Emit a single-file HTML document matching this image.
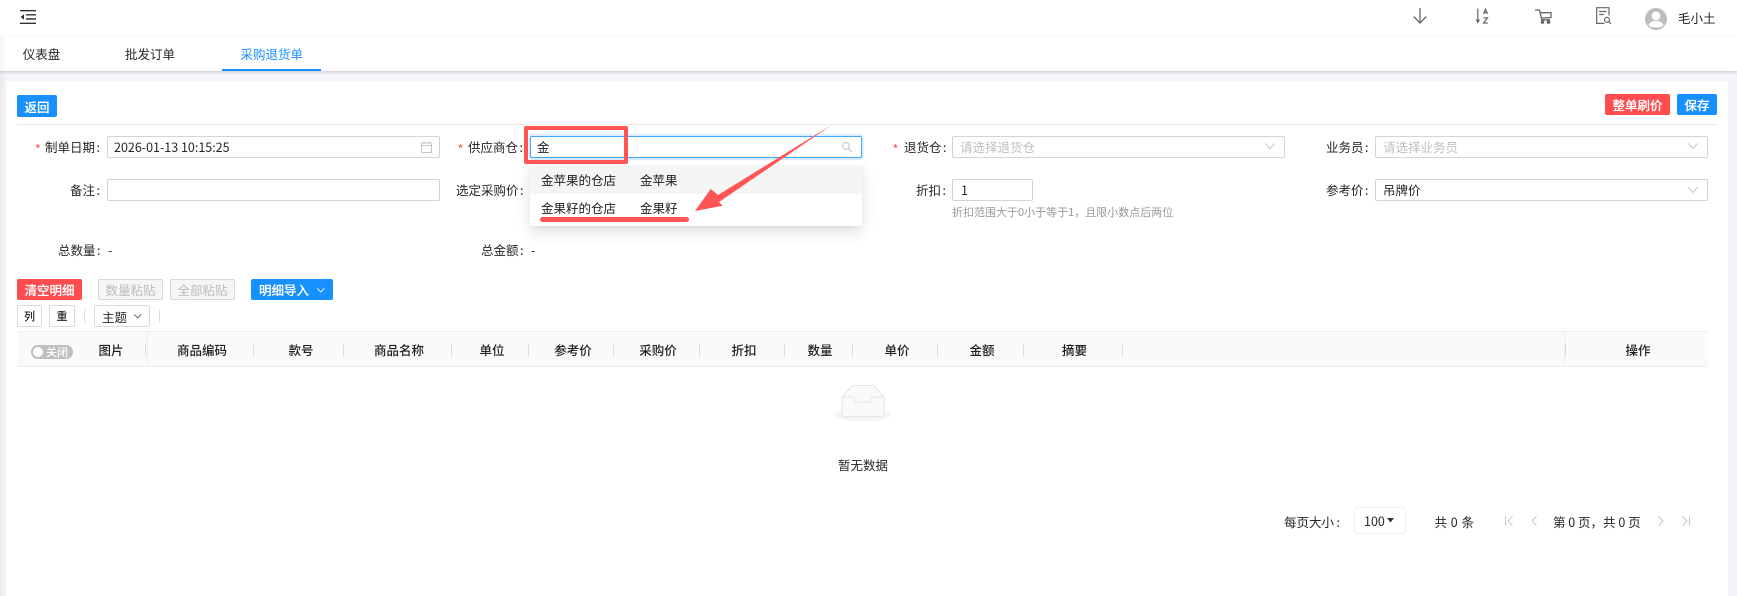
<!DOCTYPE html>
<html lang="zh-CN">
<head>
<meta charset="utf-8">
<title>采购退货单</title>
<style>
*{box-sizing:border-box;margin:0;padding:0}
html,body{width:1737px;height:596px;overflow:hidden;background:#fff}
body{position:relative;font-family:"Liberation Sans","Noto Sans CJK SC",sans-serif;font-size:12.5px;color:#262626}
.a{position:absolute}
.t{position:absolute;height:20px;line-height:20px;white-space:nowrap;font-family:"Noto Sans CJK SC","Liberation Sans",sans-serif}
.t i{font-style:normal;margin-left:1.5px}
.c{transform:translateX(-50%)}
.r{color:#ff4d4f}
.inp{position:absolute;background:#fff;border:1px solid #d4d4d4;border-radius:2px}
.btn{position:absolute;display:flex;align-items:center;justify-content:center;border-radius:2px;color:#fff;font-family:"Noto Sans CJK SC",sans-serif;font-size:12.5px;font-weight:500;white-space:nowrap;text-shadow:0 0 .4px #fff}
.blue{background:#1890ff}.red{background:#ff4d4f}
.dis{background:#f5f5f5;border:1px solid #d9d9d9;color:#bdbdbd;font-weight:400;text-shadow:none}
.wb{background:#fff;border:1px solid #d9d9d9;color:#262626;font-weight:400;text-shadow:none}
.ph{color:#bfbfbf}
.sep{position:absolute;width:1px;top:343px;height:14px;background:#dedede}
.th{font-weight:500;color:#1f1f1f;top:340px}
svg{position:absolute;overflow:visible}
</style>
</head>
<body>
<!-- page background -->
<div class="a" style="left:0;top:71px;width:1737px;height:525px;background:#f3f5f8"></div>
<div class="a" style="left:6px;top:81px;width:1722px;height:515px;background:#fff"></div>

<!-- header -->
<div class="a" style="left:0;top:0;width:1737px;height:37px;background:#fff;box-shadow:0 1px 3px rgba(0,0,0,.06)"></div>
<div class="a" style="left:0;top:37px;width:1737px;height:34px;background:#fff;box-shadow:0 1px 3px rgba(0,0,0,.2)"></div>
<div class="a" style="left:0;top:37px;width:6px;height:559px;background:linear-gradient(90deg,rgba(40,50,80,.06),rgba(40,50,80,0))"></div>

<svg style="left:20px;top:10px" width="16" height="14" fill="none" stroke="#333" stroke-width="1.4">
  <path d="M0 .7H16M6 4.800H16M6 9H16M0 13.300H16"/>
  <path d="M4 4.200V9.800L.6 7Z" fill="#333" stroke="none"/>
</svg>

<svg style="left:1413px;top:8px" width="14" height="16" fill="none" stroke="#666" stroke-width="1.3"><path d="M7 0V15M.7 8.500L7 15L13.300 8.500"/></svg>
<svg style="left:1476px;top:8px" width="14" height="16" fill="none" stroke="#666" stroke-width="1.2">
  <path d="M1.800 .5V14M.2 11.500L1.800 14.500L3.400 11.500"/>
  <path d="M7.500 6L9.500 1.300L11.500 6M8.200 4.500H10.800M7.500 9.800H11.500L7.500 15H11.800" stroke-width="1.200"/>
</svg>
<svg style="left:1535px;top:9px" width="17" height="15" fill="none" stroke="#666" stroke-width="1.3">
  <path d="M0 1H4.500L6.800 10.800H15M5 3.700H16V8.500L6.300 9"/>
  <circle cx="7.500" cy="13" r="1.200" fill="#666"/><circle cx="13.500" cy="13" r="1.200" fill="#666"/>
</svg>
<svg style="left:1596px;top:7px" width="16" height="18" fill="none" stroke="#666" stroke-width="1.2">
  <path d="M8.500 16.400H.7V.7H13V8.500M3.200 4.500H10.500M3.200 7.500H8"/>
  <circle cx="11" cy="12.800" r="2.500"/><path d="M12.800 14.600L15 16.800"/>
</svg>
<svg style="left:1645px;top:7.500px" width="22" height="22">
  <circle cx="11" cy="11" r="11" fill="#bdbdbd"/>
  <circle cx="11" cy="7.800" r="4.300" fill="#fff"/>
  <path d="M3.500 17.500C4.500 14 8 12.800 11 12.800S17.500 14 18.500 17.500C17 18.800 14 19.500 11 19.500S5 18.800 3.500 17.500Z" fill="#fff"/>
</svg>
<div class="t" style="left:1678px;top:8px;color:#1f1f1f">毛小土</div>

<!-- tabs -->
<div class="t" style="left:22.700px;top:44px">仪表盘</div>
<div class="t" style="left:125px;top:44px">批发订单</div>
<div class="t" style="left:240.500px;top:44px;color:#1890ff">采购退货单</div>
<div class="a" style="left:222px;top:69px;width:99px;height:2px;background:#1890ff"></div>

<!-- action bar -->
<div class="btn blue" style="left:17px;top:95px;width:40px;height:22px">返回</div>
<div class="btn red" style="left:1605px;top:94px;width:65px;height:21px">整单刷价</div>
<div class="btn blue" style="left:1677px;top:94px;width:40px;height:21px">保存</div>
<div class="a" style="left:17px;top:124px;width:1700px;height:1px;background:#eaeaea"></div>

<!-- form row 1 -->
<div class="t r" style="left:35px;top:139px">*</div>
<div class="t" style="left:45px;top:137px">制单日期<i>:</i></div>
<div class="inp" style="left:107px;top:136px;width:333px;height:22px"></div>
<div class="t" style="left:114px;top:137px">2026-01-13 10:15:25</div>
<svg style="left:421px;top:141px" width="11" height="12" fill="none" stroke="#c4c4c4"><path d="M.5 2H10.500V11.500H.5ZM.5 4.500H10.500M3 0V3M8 0V3"/></svg>

<div class="t r" style="left:457.500px;top:139px">*</div>
<div class="t" style="left:468px;top:137px">供应商仓<i>:</i></div>
<div class="inp" style="left:530px;top:136px;width:332px;height:22px;border-color:#40a9ff;box-shadow:0 0 0 2px rgba(24,144,255,.15)"></div>
<div class="t" style="left:537px;top:137px;color:#1f1f1f">金</div>
<svg style="left:842px;top:142px" width="10" height="10" fill="none" stroke="#c4c4c4" stroke-width="1.100"><circle cx="4" cy="4" r="3.400"/><path d="M6.500 6.500L9.800 9.800"/></svg>

<div class="t r" style="left:892.500px;top:139px">*</div>
<div class="t" style="left:904px;top:137px">退货仓<i>:</i></div>
<div class="inp" style="left:952px;top:136px;width:333px;height:22px"></div>
<div class="t ph" style="left:960px;top:137px">请选择退货仓</div>
<svg style="left:1265px;top:143px" width="10" height="6" fill="none" stroke="#c4c4c4"><path d="M.3 .3L5 5.500L9.700 .3"/></svg>

<div class="t" style="left:1326px;top:137px">业务员<i>:</i></div>
<div class="inp" style="left:1375px;top:136px;width:333px;height:22px"></div>
<div class="t ph" style="left:1383px;top:137px">请选择业务员</div>
<svg style="left:1688px;top:143px" width="10" height="6" fill="none" stroke="#c4c4c4"><path d="M.3 .3L5 5.500L9.700 .3"/></svg>

<!-- form row 2 -->
<div class="t" style="left:70px;top:180px">备注<i>:</i></div>
<div class="inp" style="left:107px;top:179px;width:333px;height:22px"></div>
<div class="t" style="left:456px;top:180px">选定采购价<i>:</i></div>
<div class="t" style="left:916px;top:180px">折扣<i>:</i></div>
<div class="inp" style="left:952px;top:179px;width:81px;height:22px"></div>
<div class="t" style="left:961px;top:180px">1</div>
<div class="t" style="left:952px;top:202px;font-size:11px;color:#999">折扣范围大于0小于等于1&#xFF0C;且限小数点后两位</div>
<div class="t" style="left:1326px;top:180px">参考价<i>:</i></div>
<div class="inp" style="left:1375px;top:179px;width:333px;height:22px"></div>
<div class="t" style="left:1383px;top:180px;color:#1f1f1f">吊牌价</div>
<svg style="left:1688px;top:187px" width="10" height="6" fill="none" stroke="#c4c4c4"><path d="M.3 .3L5 5.500L9.700 .3"/></svg>

<!-- totals -->
<div class="t" style="left:58px;top:240px">总数量<i>:</i></div>
<div class="t" style="left:108px;top:240px">-</div>
<div class="t" style="left:481px;top:240px">总金额<i>:</i></div>
<div class="t" style="left:531px;top:240px">-</div>

<!-- toolbar -->
<div class="btn red" style="left:17px;top:279px;width:65px;height:21px">清空明细</div>
<div class="btn dis" style="left:98px;top:279px;width:65px;height:21px">数量粘贴</div>
<div class="btn dis" style="left:170px;top:279px;width:65px;height:21px">全部粘贴</div>
<div class="btn blue" style="left:251px;top:279px;width:82px;height:21px;justify-content:flex-start;padding-left:8px">明细导入</div>
<svg style="left:317px;top:288px" width="8" height="5" fill="none" stroke="#fff" stroke-width=".9"><path d="M.3 .3L3.800 4L7.300 .3"/></svg>

<div class="btn wb" style="left:17px;top:305px;width:25px;height:22px;font-size:11px;font-weight:500">列</div>
<div class="btn wb" style="left:49px;top:305px;width:26px;height:22px;font-size:11px;font-weight:500">重</div>
<div class="a" style="left:84px;top:309px;width:1px;height:14px;background:#ddd"></div>
<div class="btn wb" style="left:94px;top:305px;width:56px;height:22px;justify-content:flex-start;padding-left:7px">主题</div>
<svg style="left:134px;top:314px" width="8" height="5" fill="none" stroke="#555" stroke-width=".9"><path d="M.3 .3L3.800 4L7.300 .3"/></svg>
<div class="a" style="left:159px;top:309px;width:1px;height:14px;background:#ddd"></div>

<!-- table header -->
<div class="a" style="left:17px;top:331px;width:1691px;height:36px;background:#fafafa;border-top:1px solid #eee;border-bottom:1px solid #eee"></div>
<div class="a" style="left:147px;top:331px;width:1px;height:36px;background:#eee"></div>
<div class="a" style="left:1564px;top:331px;width:1px;height:36px;background:#eee"></div>
<div class="a" style="left:31px;top:345px;width:42px;height:14px;border-radius:7px;background:#bfbfbf"></div>
<div class="a" style="left:33px;top:347px;width:10px;height:10px;border-radius:50%;background:#fff"></div>
<div class="t" style="left:46px;top:342px;font-size:11px;color:#fff;font-weight:500">关闭</div>

<div class="sep" style="left:145px"></div><div class="sep" style="left:253px"></div><div class="sep" style="left:343px"></div>
<div class="sep" style="left:451px"></div><div class="sep" style="left:528px"></div><div class="sep" style="left:613px"></div>
<div class="sep" style="left:699px"></div><div class="sep" style="left:784px"></div><div class="sep" style="left:852px"></div>
<div class="sep" style="left:937px"></div><div class="sep" style="left:1023px"></div><div class="sep" style="left:1122px"></div>
<div class="sep" style="left:1565px"></div>

<div class="t th c" style="left:111px">图片</div>
<div class="t th c" style="left:202px">商品编码</div>
<div class="t th c" style="left:301px">款号</div>
<div class="t th c" style="left:399px">商品名称</div>
<div class="t th c" style="left:492px">单位</div>
<div class="t th c" style="left:573px">参考价</div>
<div class="t th c" style="left:658px">采购价</div>
<div class="t th c" style="left:744px">折扣</div>
<div class="t th c" style="left:820px">数量</div>
<div class="t th c" style="left:897px">单价</div>
<div class="t th c" style="left:982px">金额</div>
<div class="t th c" style="left:1074.500px">摘要</div>
<div class="t th c" style="left:1638px">操作</div>

<!-- empty state -->
<svg style="left:834px;top:385px" width="58" height="37">
  <ellipse cx="28.500" cy="30" rx="28.500" ry="6.500" fill="#f5f5f5"/>
  <path d="M8 12L18.600 .5H39.600L50 12V29.500Q50 31.500 48 31.500H10Q8 31.500 8 29.500Z" fill="#fafafa" stroke="#e6e6e6"/>
  <path d="M8 12H19Q20.500 12 20.500 14V15.500Q20.500 17 22 17H36Q37.700 17 37.700 15.500V14Q37.700 12 39 12H50" fill="none" stroke="#e6e6e6"/>
</svg>
<div class="t" style="left:838px;top:455px">暂无数据</div>

<!-- pagination -->
<div class="t" style="left:1284px;top:512px">每页大小<i style="margin-left:2.500px">:</i></div>
<div class="a" style="left:1354px;top:507px;width:52px;height:27px;border:1px solid #eee;border-radius:4px;background:#fff"></div>
<div class="t" style="left:1364px;top:511px">100</div>
<svg style="left:1387px;top:518px" width="7" height="5"><path d="M0 0H7L3.500 4.500Z" fill="#333"/></svg>
<div class="t" style="left:1434.500px;top:512px;word-spacing:1px">共 0 条</div>
<svg style="left:1505px;top:516px" width="8" height="10" fill="none" stroke="#c4c4c4"><path d="M.5 .5V9.500M7.500 .5L3 5L7.500 9.500"/></svg>
<svg style="left:1531px;top:516px" width="6" height="10" fill="none" stroke="#c4c4c4"><path d="M5.500 .5L1 5L5.500 9.500"/></svg>
<div class="t" style="left:1553px;top:512px">第 0 页&#xFF0C;共 0 页</div>
<svg style="left:1658px;top:516px" width="6" height="10" fill="none" stroke="#c4c4c4"><path d="M.5 .5L5 5L.5 9.500"/></svg>
<svg style="left:1682px;top:516px" width="8" height="10" fill="none" stroke="#c4c4c4"><path d="M.5 .5L5 5L.5 9.500M7.500 .5V9.500"/></svg>

<!-- dropdown -->
<div class="a" style="left:530px;top:161px;width:332px;height:65px;background:#fff;border-radius:2px;box-shadow:0 6px 16px rgba(0,0,0,.12),0 3px 6px -4px rgba(0,0,0,.14)"></div>
<div class="a" style="left:530px;top:165px;width:332px;height:29px;background:#f5f5f5"></div>
<div class="t" style="left:541px;top:170px;color:#1f1f1f">金苹果的仓店</div>
<div class="t" style="left:640px;top:170px;color:#1f1f1f">金苹果</div>
<div class="t" style="left:541px;top:198px;color:#1f1f1f">金果籽的仓店</div>
<div class="t" style="left:640px;top:198px;color:#1f1f1f">金果籽</div>

<!-- annotations -->
<div class="a" style="left:524px;top:126px;width:104px;height:38px;border:4px solid #f55;border-radius:2px"></div>
<div class="a" style="left:540px;top:217px;width:149px;height:5px;background:#f55;border-radius:3px"></div>
<svg style="left:0;top:0" width="1737" height="596"><path d="M832.700 124.300L718 195L710.700 189L695 211L722.700 205.700L719 202Z" fill="#f55"/></svg>
</body>
</html>
